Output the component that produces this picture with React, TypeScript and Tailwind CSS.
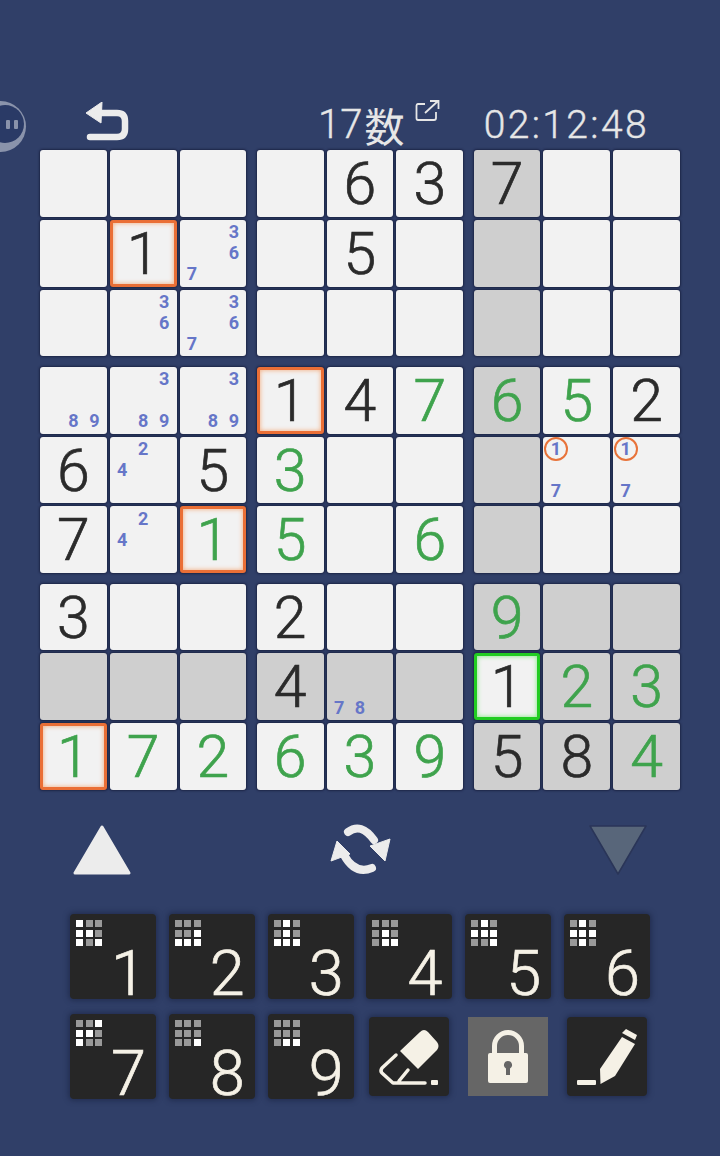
const FONT = "font-['Roboto',sans-serif]";

// one token per cell: "" empty, "6" dark digit, "g6" green digit,
// "o1"/"og1" orange frame, "s1" selected, "n367" pencil marks, "c" = circled 1
const BOARD: string[][] = [
    ['', '', '', '', '6', '3', '7', '', ''],
    ['', 'o1', 'n367', '', '5', '', '', '', ''],
    ['', 'n36', 'n367', '', '', '', '', '', ''],
    ['n89', 'n389', 'n389', 'o1', '4', 'g7', 'g6', 'g5', '2'],
    ['6', 'n24', '5', 'g3', '', '', '', 'nc7', 'nc7'],
    ['7', 'n24', 'og1', 'g5', '', 'g6', '', '', ''],
    ['3', '', '', '2', '', '', 'g9', '', ''],
    ['', '', '', '4', 'n78', '', 's1', 'g2', 'g3'],
    ['og1', 'g7', 'g2', 'g6', 'g3', 'g9', '5', '8', 'g4'],
];

const isGray = (r: number, c: number) => {
    if (c === 6) return r !== 7;
    if (r === 6) return c > 6;
    if (r === 7) return c !== 6;
    return r === 8 && c > 6;
};

const Notes = ({ marks }: { marks: string }) => (
    <div className={`grid h-full w-full grid-cols-3 grid-rows-3 p-[2px] text-[18px] font-bold leading-none text-[#6676c8] ${FONT}`}>
        {['1', '2', '3', '4', '5', '6', '7', '8', '9'].map((d) => {
            const circled = d === '1' && marks.includes('c');
            return (
                <span key={d} className="flex items-center justify-center">
                    {circled ? (
                        <span className="flex h-[24px] w-[24px] shrink-0 items-center justify-center rounded-full border-[2.5px] border-[#e8733a]">1</span>
                    ) : (
                        marks.includes(d) && d
                    )}
                </span>
            );
        })}
    </div>
);

const Cell = ({ token, gray }: { token: string; gray: boolean }) => {
    const selected = token[0] === 's';
    const orange = token[0] === 'o';
    const green = token.includes('g');
    const digit = token.replace(/[a-z]/g, '');
    let frame = 'shadow-[0_0_2px_1px_#1d2647]';
    if (orange) frame = 'border-[3px] border-[#ea6f36] shadow-[inset_0_0_5px_#f5a878,0_0_2px_1px_#1d2647]';
    if (selected) frame = 'border-[3px] border-[#22cc22] shadow-[inset_0_0_5px_#7ce87c,0_0_2px_1px_#1d2647]';
    return (
        <div
            className={[
                'flex aspect-square items-center justify-center rounded-[3px]',
                gray && !selected ? 'bg-[#cfcfcf]' : 'bg-[#f2f2f2]',
                frame,
            ].join(' ')}
        >
            {token[0] === 'n' ? (
                <Notes marks={token.slice(1)} />
            ) : (
                <span className={`text-[59px] font-light leading-none [-webkit-text-stroke:0.7px] ${FONT} ${green ? 'text-[#3fa34d]' : 'text-[#2b2b2b]'}`}>{digit}</span>
            )}
        </div>
    );
};

const Board = () => (
    <div className="flex w-[640px] flex-col gap-[10.5px]">
        {[0, 3, 6].map((r0) => (
            <div key={r0} className="grid grid-cols-3 gap-[10.5px]">
                {[0, 3, 6].map((c0) => (
                    <div key={c0} className="grid grid-cols-3 gap-[3px]">
                        {[0, 1, 2].flatMap((r) =>
                            [0, 1, 2].map((c) => (
                                <Cell key={`${r}-${c}`} token={BOARD[r0 + r][c0 + c]} gray={isGray(r0 + r, c0 + c)} />
                            ))
                        )}
                    </div>
                ))}
            </div>
        ))}
    </div>
);

const PATTERNS: Record<number, string> = {
    1: '100110101',
    2: '000001111',
    3: '010010111',
    4: '000010011',
    5: '010111001',
    6: '010111010',
    7: '001110100',
    8: '000000001',
    9: '000000011',
};

const NumKey = ({ n }: { n: number }) => (
    <button className="relative h-[85px] w-[86px] rounded-[4px] bg-[#262626] shadow-[0_0_5px_2px_#232f52]">
        <div className="absolute left-[6px] top-[6px] grid grid-cols-3 gap-[2.5px]">
            {PATTERNS[n].split('').map((b, i) => (
                <span key={i} className={`h-[7px] w-[7px] ${b === '1' ? 'bg-white' : 'bg-[#999999]'}`} />
            ))}
        </div>
        <span className={`absolute bottom-[-6px] right-[10px] text-[63px] font-light leading-none text-[#f5f1e6] [-webkit-text-stroke:0.7px] ${FONT}`}>{n}</span>
    </button>
);

const ToolKey = ({ children, active }: { children: React.ReactNode; active?: boolean }) => (
    <div className="flex h-[85px] w-[86px] items-center justify-center">
        <button
            className={[
                'flex h-[79px] w-[80px] items-center justify-center',
                active ? 'bg-[#666666]' : 'rounded-[4px] bg-[#262626] shadow-[0_0_5px_2px_#232f52]',
            ].join(' ')}
        >
            {children}
        </button>
    </div>
);

const Eraser = () => (
    <svg width="64" height="60" viewBox="0 0 64 60" fill="none">
        <path d="M23 24 L43 5 Q47 1 51 5 L60 15 Q63 19 60 23 L41 42 Z" fill="#f5f1e6" />
        <path d="M19 28 L5 41 Q3 44 5 46 L16 56 L48 56 M31 43 L22 54" stroke="#f5f1e6" strokeWidth="3.5" strokeLinecap="round" strokeLinejoin="round" />
        <rect x="54" y="53" width="7" height="5" rx="1" fill="#f5f1e6" />
    </svg>
);

const Lock = () => (
    <svg width="44" height="56" viewBox="0 0 44 56">
        <path d="M8.5 26 V17 A13.5 13.5 0 0 1 35.5 17 V26" fill="none" stroke="#f5f1e6" strokeWidth="5" />
        <path fillRule="evenodd" fill="#f5f1e6" d="M4 24 H40 Q42 24 42 26 V52 Q42 54 40 54 H4 Q2 54 2 52 V26 Q2 24 4 24 Z M22 32 A4 4 0 0 0 20 39.5 L20 46 H24 L24 39.5 A4 4 0 0 0 22 32 Z" />
    </svg>
);

const Pen = () => (
    <svg width="64" height="60" viewBox="0 0 64 60" fill="#f5f1e6">
        <rect x="2" y="53" width="19" height="5" rx="1" />
        <path d="M25 42 L47 10 L60 17 L40 49 L25.5 57 Z" />
        <path d="M47 6 L51 2 L62 8 L60 13 Z" />
    </svg>
);

const Refresh = () => (
    <svg width="70" height="62" viewBox="0 0 70 62" fill="#ececec">
        <path d="M23 13 Q36 3 49 21" fill="none" stroke="#ececec" strokeWidth="8" strokeLinecap="round" />
        <path d="M45 27 L65 20 L60 42 Z" stroke="#ececec" strokeWidth="1" strokeLinejoin="round" />
        <path d="M47 49 Q30 56 19 36" fill="none" stroke="#ececec" strokeWidth="8" strokeLinecap="round" />
        <path d="M12 22 L25 35 L6 42 Z" stroke="#ececec" strokeWidth="1" strokeLinejoin="round" />
    </svg>
);

const App = () => (
    <div className="relative h-[1156px] w-[720px] overflow-hidden bg-[#303f68] pl-[40px] pt-[100px]">
        {/* floating assistive button, cut off by the screen edge */}
        <div className="absolute left-[-25px] top-[101px] h-[51px] w-[51px] rounded-full bg-[#8a93ab]">
            <div className="absolute left-[11px] top-[4px] flex h-[38px] w-[38px] items-center justify-center rounded-full bg-[#2a3a66]">
                <span className="ml-[14px] flex gap-[4px]">
                    <span className="h-[9px] w-[4px] rounded-[1px] bg-[#8a93ab]" />
                    <span className="h-[9px] w-[4px] rounded-[1px] bg-[#8a93ab]" />
                </span>
            </div>
        </div>

        <header className="flex h-[50px] w-[640px] items-start text-[#e6e6e6]">
            <svg className="ml-[45px] mt-[2px]" width="44" height="40" viewBox="0 0 44 40" fill="none">
                <path d="M1 11 L17 0 L16 21 Z" fill="#ececec" stroke="#ececec" strokeWidth="1" strokeLinejoin="round" />
                <path d="M12 11 H32 Q40 11 40 19 V27 Q40 35 32 35 H5" stroke="#ececec" strokeWidth="6.5" strokeLinecap="round" />
            </svg>
            <div className="ml-[189px] mt-[3px] flex items-start">
                <span className={`text-[40px] font-light leading-[44px] [-webkit-text-stroke:0.4px] ${FONT}`}>17</span>
                <span className="ml-[2px] text-[40px] leading-[44px] font-['Noto_Sans_CJK_JP',sans-serif]">数</span>
                <svg className="ml-[11px] mt-[-4px]" width="26" height="24" viewBox="0 0 26 24" fill="none" stroke="#e6e6e6" strokeWidth="1.8">
                    <path d="M10 5 H3 Q1.5 5 1.5 7 V19 Q1.5 21 3 21 H19 Q21 21 21 19 V13" />
                    <path d="M10 14 L23 2 M15 2 H23.5 V10" />
                </svg>
            </div>
            <span className={`ml-auto mr-[31px] mt-[3px] text-[39px] font-light leading-[44px] tracking-[2.4px] [-webkit-text-stroke:0.4px] ${FONT}`}>02:12:48</span>
        </header>

        <Board />

        <div className="ml-[32px] mt-[33px] flex h-[54px] w-[576px] items-center justify-between">
            <svg width="60" height="52" viewBox="0 0 60 52">
                <path d="M30 3 L57 49 H3 Z" fill="#ececec" stroke="#ececec" strokeWidth="3" strokeLinejoin="round" />
            </svg>
            <Refresh />
            <svg width="60" height="52" viewBox="0 0 60 52">
                <path d="M2 2 H58 L30 50 Z" fill="#58667a" stroke="#2a3558" strokeWidth="1.5" strokeLinejoin="round" />
            </svg>
        </div>

        <div className="ml-[30px] mt-[37px] flex w-[580px] flex-col gap-[15px]">
            <div className="flex justify-between">
                {[1, 2, 3, 4, 5, 6].map((n) => <NumKey key={n} n={n} />)}
            </div>
            <div className="flex justify-between">
                {[7, 8, 9].map((n) => <NumKey key={n} n={n} />)}
                <ToolKey><Eraser /></ToolKey>
                <ToolKey active><Lock /></ToolKey>
                <ToolKey><Pen /></ToolKey>
            </div>
        </div>
    </div>
);

export default App;
